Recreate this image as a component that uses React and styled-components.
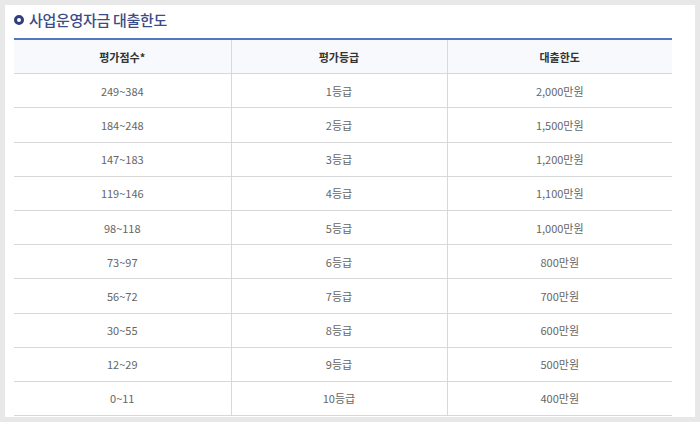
import React from "react";
import styled, { createGlobalStyle } from "styled-components";

const GlobalStyle = createGlobalStyle`
  html, body {
    margin: 0;
    padding: 0;
    background: #e8e8e8;
  }
  body {
    font-family: "Noto Sans CJK KR", "Noto Sans", sans-serif;
  }
`;

const Frame = styled.div`
  width: 700px;
  height: 422px;
  padding: 5px;
  box-sizing: border-box;
`;

const Card = styled.div`
  background: #fff;
  height: 412px;
  padding: 4px 23px 0 9px;
  box-sizing: border-box;
  overflow: hidden;
`;

const Title = styled.h3`
  display: flex;
  align-items: center;
  gap: 5px;
  margin: 0 0 8px 0;
  height: 21px;
  font-size: 15px;
  font-weight: 500;
  color: #3c4c86;
  letter-spacing: -0.3px;
`;

const Bullet = styled.span`
  width: 4px;
  height: 4px;
  border: 3px solid #2f3f7c;
  border-radius: 50%;
`;

const Table = styled.table`
  width: 100%;
  border-collapse: collapse;
  border-top: 2px solid #5675bf;
  table-layout: fixed;
  font-size: 11px;
`;

const Col = styled.col`
  width: ${({ $w }) => ($w ? `${$w}px` : "auto")};
`;

const Th = styled.th`
  height: 33.2px;
  padding: 0;
  background: #f8f9fc;
  color: #333;
  font-weight: 700;
  border-bottom: 1px solid #d8d8d8;
  border-left: 1px solid #d8d8d8;
  &:first-child {
    border-left: none;
  }
`;

const Td = styled.td`
  height: 33.2px;
  padding: 0;
  text-align: center;
  color: #666;
  border-bottom: 1px solid #d8d8d8;
  border-left: 1px solid #d8d8d8;
  &:first-child {
    border-left: none;
  }
`;

const rows = [
  ["249~384", "1등급", "2,000만원"],
  ["184~248", "2등급", "1,500만원"],
  ["147~183", "3등급", "1,200만원"],
  ["119~146", "4등급", "1,100만원"],
  ["98~118", "5등급", "1,000만원"],
  ["73~97", "6등급", "800만원"],
  ["56~72", "7등급", "700만원"],
  ["30~55", "8등급", "600만원"],
  ["12~29", "9등급", "500만원"],
  ["0~11", "10등급", "400만원"],
];

const App = () => {
  return (
    <Frame>
      <GlobalStyle />
      <Card>
        <Title>
          <Bullet />
          사업운영자금 대출한도
        </Title>
        <Table>
          <colgroup>
            <Col $w={217} />
            <Col $w={216} />
            <Col />
          </colgroup>
          <thead>
            <tr>
              <Th>평가점수*</Th>
              <Th>평가등급</Th>
              <Th>대출한도</Th>
            </tr>
          </thead>
          <tbody>
            {rows.map((r) => (
              <tr key={r[0]}>
                {r.map((c) => (
                  <Td key={c}>{c}</Td>
                ))}
              </tr>
            ))}
          </tbody>
        </Table>
      </Card>
    </Frame>
  );
};

export default App;
